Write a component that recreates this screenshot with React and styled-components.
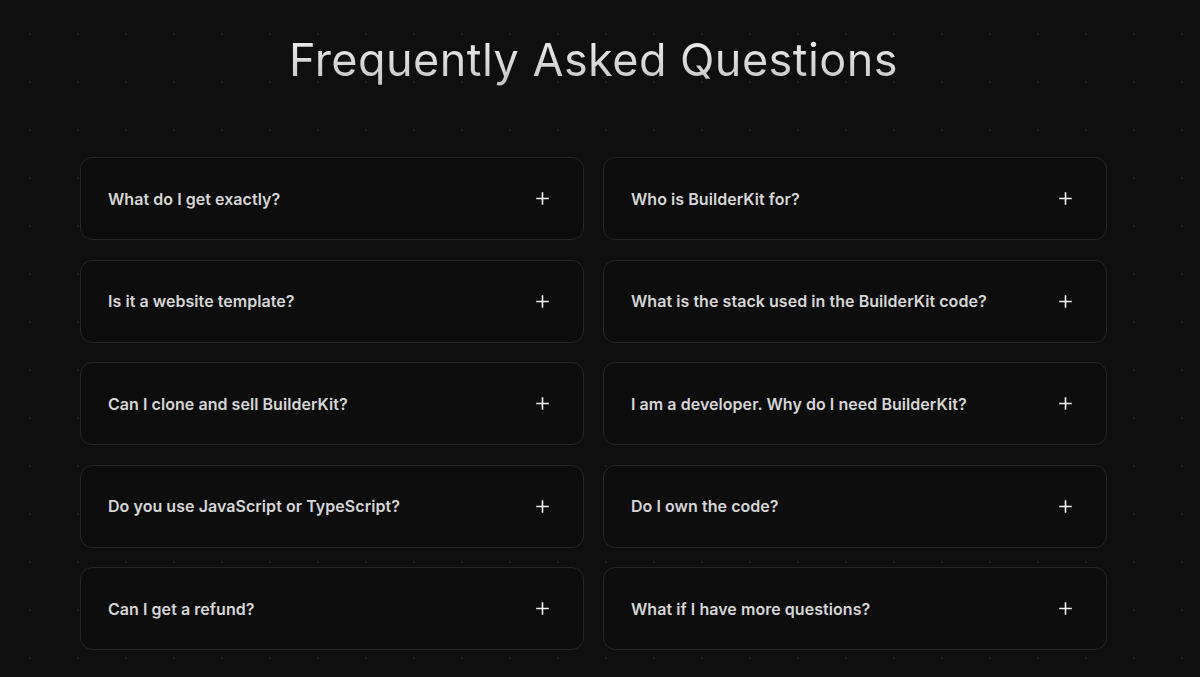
import React from "react";
import styled, {createGlobalStyle} from "styled-components";

const questions = [
    "What do I get exactly?",
    "Who is BuilderKit for?",
    "Is it a website template?",
    "What is the stack used in the BuilderKit code?",
    "Can I clone and sell BuilderKit?",
    "I am a developer. Why do I need BuilderKit?",
    "Do you use JavaScript or TypeScript?",
    "Do I own the code?",
    "Can I get a refund?",
    "What if I have more questions?",
]

const Global = createGlobalStyle`
  html, body {
    margin: 0;
    padding: 0;
    background: #0f0f0f;
  }
  body {
    font-family: Inter, "Noto Sans", sans-serif;
  }
`

const App = () => {
    return (
        <Page>
            <Global/>
            <Section>
                <Title>Frequently Asked Questions</Title>
                <Grid>
                    {
                        questions.map(q => (
                            <Card key={q}>
                                <Question>{q}</Question>
                                <PlusIcon/>
                            </Card>
                        ))
                    }
                </Grid>
            </Section>
        </Page>
    )
}

const PlusIcon = () => (
    <Icon width="13" height="13" viewBox="0 0 13 13">
        <path d="M6.5 1v11M1 6.5h11" stroke="#f2f2f2" strokeWidth="1.6" strokeLinecap="square"/>
    </Icon>
)

const Page = styled.div`
  min-height: 677px;
  background-color: #0f0f0f;
  background-image: radial-gradient(rgba(255, 255, 255, 0.06) 1px, transparent 1.2px);
  background-size: 48px 48px;
  background-position: 6px 10px;
  overflow: hidden;
`
const Section = styled.div`
  width: 1027px;
  margin-left: 80px;
  padding-top: 34px;
`
const Title = styled.h1`
  margin: 0 0 71px;
  text-align: center;
  font-family: Inter, "Noto Sans", sans-serif;
  font-weight: 400;
  font-size: 45px;
  line-height: 52px;
  letter-spacing: 0.45px;
  background: linear-gradient(180deg, #f0f0f0 0%, #c4c4c4 100%);
  -webkit-background-clip: text;
  background-clip: text;
  color: transparent;
`
const Grid = styled.div`
  display: grid;
  grid-template-columns: 1fr 1fr;
  column-gap: 19px;
  row-gap: 19.5px;
`
const Card = styled.div`
  height: 83px;
  box-sizing: border-box;
  display: flex;
  align-items: center;
  justify-content: space-between;
  padding: 0 34px 0 27px;
  border: 1px solid #272727;
  border-radius: 12px;
  background: #0d0d0d;
`
const Question = styled.span`
  color: #d6d6d6;
  font-size: 16px;
  font-weight: 600;
  letter-spacing: 0.05px;
`
const Icon = styled.svg`
  flex-shrink: 0;
`

export default App
